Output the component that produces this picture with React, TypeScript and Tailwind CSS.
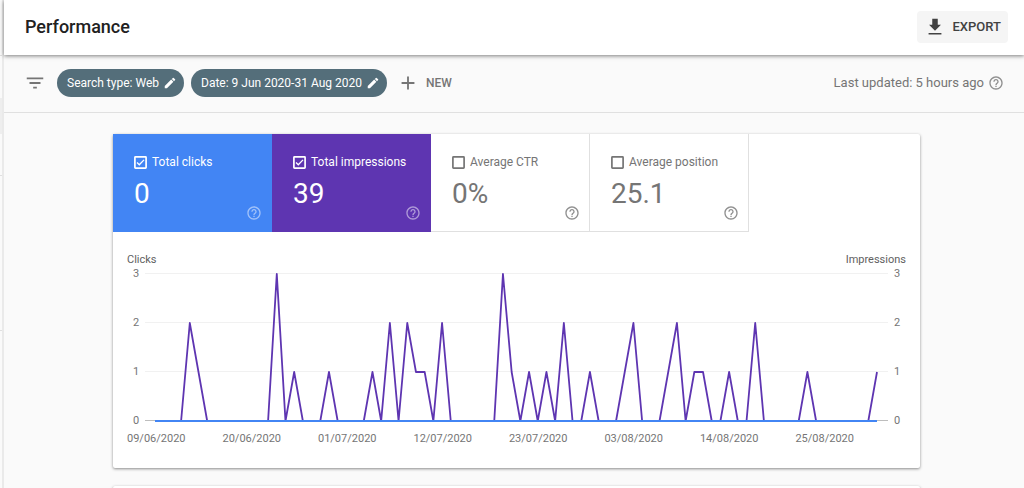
import { useState } from 'react';
import { MdAdd, MdEdit, MdFilterList, MdHelpOutline } from 'react-icons/md';

const FILTERS = ['Search type: Web', 'Date: 9 Jun 2020-31 Aug 2020'];

const METRICS = [
  { id: 'clicks', label: 'Total clicks', value: '0', on: 'bg-[#4285f4] border-[#4285f4]' },
  { id: 'impressions', label: 'Total impressions', value: '39', on: 'bg-[#5e35b1] border-[#5e35b1]' },
  { id: 'ctr', label: 'Average CTR', value: '0%', on: 'bg-[#00897b] border-[#00897b]' },
  { id: 'position', label: 'Average position', value: '25.1', on: 'bg-[#e8710a] border-[#e8710a]' },
];

const TICKS = [3, 2, 1, 0];

const DATES = [
  '09/06/2020',
  '20/06/2020',
  '01/07/2020',
  '12/07/2020',
  '23/07/2020',
  '03/08/2020',
  '14/08/2020',
  '25/08/2020',
];

// one value per day, 9 Jun - 31 Aug
const IMPRESSIONS = [
  0, 0, 0, 0, 2, 1, 0, 0, 0, 0, 0, 0, 0, 0, 3, 0, 1, 0, 0, 0, 1, 0, 0, 0, 0, 1, 0, 2, 0, 2, 1, 1, 0, 2, 0, 0, 0, 0,
  0, 0, 3, 1, 0, 1, 0, 1, 0, 2, 0, 0, 1, 0, 0, 0, 1, 2, 0, 0, 0, 1, 2, 0, 1, 1, 0, 0, 1, 0, 0, 2, 0, 0, 0, 0, 0, 1,
  0, 0, 0, 0, 0, 0, 0, 1,
];
const CLICKS = IMPRESSIONS.map(() => 0);

const CHART_W = 743;
const CHART_H = 149;
const ROW_H = 49;

const toPoints = (values: number[]) =>
  values.map((v, i) => `${10 + (i * 722) / (values.length - 1)},${1 + (3 - v) * ROW_H}`).join(' ');

function CheckIcon({ on }: { on: boolean }) {
  return (
    <svg
      className="size-[17px] [grid-area:1/1] pointer-events-none"
      viewBox="0 0 17 17"
      fill="none"
      stroke="currentColor"
      aria-hidden="true"
    >
      <rect x="2.9" y="2.9" width="11.2" height="11.2" rx="0.6" strokeWidth="1.7" />
      {on && <path d="M5 8.5l2.3 2.3 4.7-4.9" strokeWidth="1.3" />}
    </svg>
  );
}

function Axis() {
  return (
    <div className="w-[18px] h-[163px] -my-[7px] shrink-0 flex flex-col justify-between text-center">
      {TICKS.map((t) => (
        <span key={t}>{t}</span>
      ))}
    </div>
  );
}

function Chart({ visible }: { visible: string[] }) {
  return (
    <div className="px-[14px] pt-5 pb-[21px] text-[11px] leading-4 text-[#757575]">
      <div className="flex justify-between text-[#616161]">
        <span>Clicks</span>
        <span>Impressions</span>
      </div>
      <div className="flex mt-[5px]">
        <Axis />
        <svg
          className="flex-1 min-w-0 h-[149px]"
          viewBox={`0 0 ${CHART_W} ${CHART_H}`}
          preserveAspectRatio="none"
          role="img"
          aria-label="Clicks and impressions per day"
        >
          {TICKS.map((t) => (
            <rect key={t} x="0" y={(3 - t) * ROW_H} width={CHART_W} height="1" fill={t === 0 ? '#bdbdbd' : '#f1f1f1'} />
          ))}
          {visible.includes('impressions') && (
            <polyline points={toPoints(IMPRESSIONS)} fill="none" stroke="#5e35b1" strokeWidth="1.8" strokeLinejoin="round" />
          )}
          {visible.includes('clicks') && (
            <polyline points={toPoints(CLICKS)} fill="none" stroke="#4285f4" strokeWidth="2" />
          )}
        </svg>
        <Axis />
      </div>
      <div className="flex justify-between mt-[9px] pr-[52px]">
        {DATES.map((d) => (
          <span key={d}>{d}</span>
        ))}
      </div>
    </div>
  );
}

export default function App() {
  const [checked, setChecked] = useState(['clicks', 'impressions']);

  const toggle = (id: string) =>
    setChecked((c) => (c.includes(id) ? c.filter((x) => x !== id) : [...c, id]));

  return (
    <div className="flex h-screen overflow-hidden bg-[#fafafa] font-[Roboto,sans-serif] text-[#757575]">
      {/* edge of the collapsed side nav */}
      <aside className="w-1 shrink-0 flex flex-col border-r-2 border-[#eaeaea]">
        <div className="h-14 border-b border-[#e0e0e0]" />
        <div className="mt-[42px] h-9 bg-[#eeeeee]" />
        <div className="h-[42px] border-b border-[#e0e0e0]" />
        <div className="h-[155px] border-b border-[#e0e0e0]" />
      </aside>

      <div className="flex-1 min-w-0 flex flex-col">
        <header className="relative h-[55px] shrink-0 flex items-center justify-between pb-[2px] pl-[21px] pr-4 bg-white shadow-[0_1px_4px_rgba(0,0,0,0.5)]">
          <h1 className="text-lg font-medium text-[#212121]">Performance</h1>
          <button type="button" className="h-8 flex items-center gap-[7px] px-[7px] rounded-sm bg-[#f5f5f5] text-[13px] font-medium text-[#424242]">
            <svg className="size-[22px]" viewBox="0 0 24 24" fill="currentColor" aria-hidden="true">
              <path d="M18.5 9.5H15V3H9v6.5H5.5L12 16zM5 18.5v1.7h14v-1.7z" />
            </svg>
            EXPORT
          </button>
        </header>

        <div className="h-[58px] shrink-0 flex items-center pb-[2px] pl-5 pr-5 border-b border-[#e0e0e0]">
          <button type="button" aria-label="Filter">
            <MdFilterList className="size-[22px]" />
          </button>
          <div className="flex gap-[7px] ml-[11px]">
            {FILTERS.map((f) => (
              <button
                key={f}
                type="button"
                className="h-7 flex items-center gap-1 pl-[10px] pr-[7px] rounded-full bg-[#546e7a] text-xs text-white"
              >
                {f}
                <MdEdit className="size-[14px]" />
              </button>
            ))}
          </div>
          <button type="button" className="flex items-center gap-[7px] ml-[10px] text-xs font-medium">
            <MdAdd className="size-[22px]" />
            NEW
          </button>
          <div className="flex items-center gap-1 ml-auto text-[13px]">
            Last updated: 5 hours ago
            <MdHelpOutline className="size-4 opacity-80" />
          </div>
        </div>

        <main className="pl-[109px] pr-[104px] pt-[21px]">
          <section className="bg-white rounded-xs shadow-[0_1px_3px_rgba(0,0,0,0.45)]">
            <div className="flex">
              {METRICS.map((m) => {
                const on = checked.includes(m.id);
                return (
                  <div
                    key={m.id}
                    className={`relative w-[159px] h-[98px] pl-[19px] pt-5 border-r border-b ${on ? `${m.on} text-white` : 'border-[#e0e0e0]'}`}
                  >
                    <label className="flex items-center gap-[3px] text-xs leading-[17px]">
                      <span className="grid size-[17px]">
                        <input
                          type="checkbox"
                          checked={on}
                          onChange={() => toggle(m.id)}
                          className="appearance-none size-[17px] [grid-area:1/1]"
                        />
                        <CheckIcon on={on} />
                      </span>
                      {m.label}
                    </label>
                    <p className="mt-[7px] pl-[2px] text-[28px] leading-8">{m.value}</p>
                    <button
                      type="button"
                      aria-label={`About ${m.label}`}
                      className={`absolute right-[9px] bottom-[10px] ${on ? 'opacity-50' : 'opacity-80'}`}
                    >
                      <MdHelpOutline className="size-4" />
                    </button>
                  </div>
                );
              })}
            </div>
            <Chart visible={checked} />
          </section>
          <section className="mt-[18px] h-20 bg-white rounded-xs shadow-[0_1px_3px_rgba(0,0,0,0.45)]" />
        </main>
      </div>
    </div>
  );
}
